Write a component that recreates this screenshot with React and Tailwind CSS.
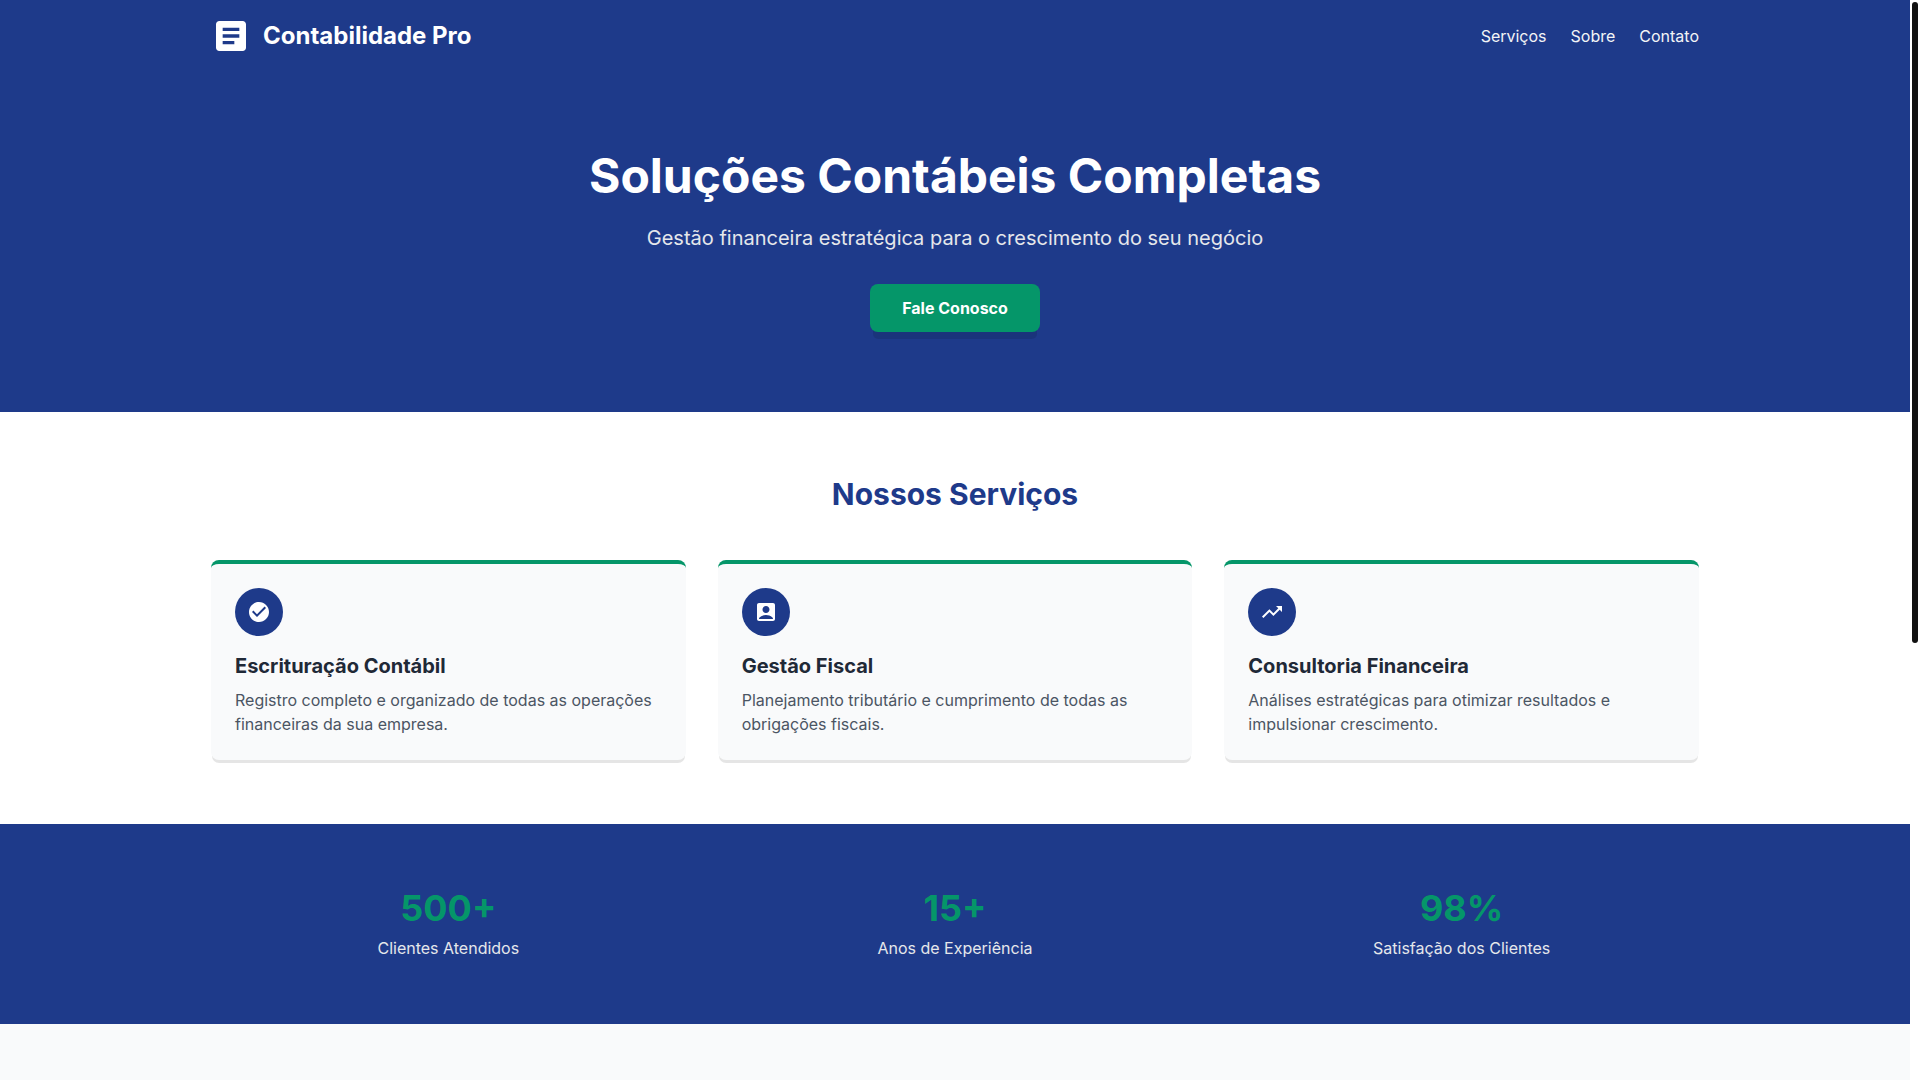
import React from 'react';
import { MdAccountBox, MdArticle, MdCheckCircle, MdTrendingUp } from 'react-icons/md';

const navLinks = [
  { label: 'Serviços', href: '#servicos' },
  { label: 'Sobre', href: '#sobre' },
  { label: 'Contato', href: '#contato' }
];

const services = [
  {
    icon: MdCheckCircle,
    title: 'Escrituração Contábil',
    description: 'Registro completo e organizado de todas as operações financeiras da sua empresa.'
  },
  {
    icon: MdAccountBox,
    title: 'Gestão Fiscal',
    description: 'Planejamento tributário e cumprimento de todas as obrigações fiscais.'
  },
  {
    icon: MdTrendingUp,
    title: 'Consultoria Financeira',
    description: 'Análises estratégicas para otimizar resultados e impulsionar crescimento.'
  }
];

const stats = [
  { value: '500+', label: 'Clientes Atendidos' },
  { value: '15+', label: 'Anos de Experiência' },
  { value: '98%', label: 'Satisfação dos Clientes' }
];

const Header = () => (
  <header className="bg-[#1e3a8a] text-white">
    <div className="container mx-auto px-6 py-4 flex items-center justify-between">
      <div className="flex items-center gap-3">
        <MdArticle className="w-10 h-10" />
        <span className="text-2xl font-bold">Contabilidade Pro</span>
      </div>
      <nav className="flex gap-6">
        {navLinks.map((link) => (
          <a key={link.href} href={link.href} className="text-gray-100 hover:text-white transition-colors">
            {link.label}
          </a>
        ))}
      </nav>
    </div>
  </header>
);

const Hero = () => (
  <section className="bg-[#1e3a8a] text-white py-20">
    <div className="container mx-auto px-6 text-center">
      <h1 className="text-5xl font-bold mb-6">Soluções Contábeis Completas</h1>
      <p className="text-xl text-gray-200 mb-8">
        Gestão financeira estratégica para o crescimento do seu negócio
      </p>
      <button
        type="button"
        className="block mx-auto bg-[#059669] text-white font-bold px-8 py-3 rounded-lg shadow-[0_10px_0_-3px_rgba(0,0,0,0.1)] hover:bg-[#047857] transition-colors"
      >
        Fale Conosco
      </button>
    </div>
  </section>
);

const ServiceCard = ({ icon: Icon, title, description }) => (
  <article className="bg-[#f9fafb] p-6 rounded-lg border-t-4 border-[#059669] shadow-[0_4px_0_-1px_rgba(0,0,0,0.1)]">
    <div className="w-12 h-12 mb-4 rounded-full bg-[#1e3a8a] text-white flex items-center justify-center">
      <Icon className="w-6 h-6" />
    </div>
    <h3 className="text-xl font-bold text-[#1f2937] mb-2">{title}</h3>
    <p className="text-[#4b5563]">{description}</p>
  </article>
);

const Services = () => (
  <section id="servicos" className="bg-white py-16">
    <div className="container mx-auto px-6">
      <h2 className="text-3xl font-bold text-center text-[#1e3a8a] mb-12">Nossos Serviços</h2>
      <div className="grid grid-cols-1 md:grid-cols-3 gap-8">
        {services.map((service) => (
          <ServiceCard key={service.title} {...service} />
        ))}
      </div>
    </div>
  </section>
);

const Stats = () => (
  <section id="sobre" className="bg-[#1e3a8a] py-16">
    <div className="container mx-auto px-6 grid grid-cols-1 md:grid-cols-3 gap-8 text-center">
      {stats.map((stat) => (
        <div key={stat.label}>
          <div className="text-4xl font-bold text-[#059669] mb-2">{stat.value}</div>
          <div className="text-gray-200">{stat.label}</div>
        </div>
      ))}
    </div>
  </section>
);

// Slim page scrollbar in its own gutter
const ScrollGutter = () => (
  <div aria-hidden="true" className="w-[10px] shrink-0 bg-white p-0.5">
    <div className="w-1.5 h-[641px] rounded-full bg-[#111111]" />
  </div>
);

const App = () => (
  <div className="flex min-h-screen font-['Inter',sans-serif]">
    <div className="flex flex-1 flex-col min-w-0">
      <Header />
      <main className="flex flex-1 flex-col">
        <Hero />
        <Services />
        <Stats />
        <section id="contato" className="flex-1 bg-[#f9fafb]" />
      </main>
    </div>
    <ScrollGutter />
  </div>
);

export default App;
